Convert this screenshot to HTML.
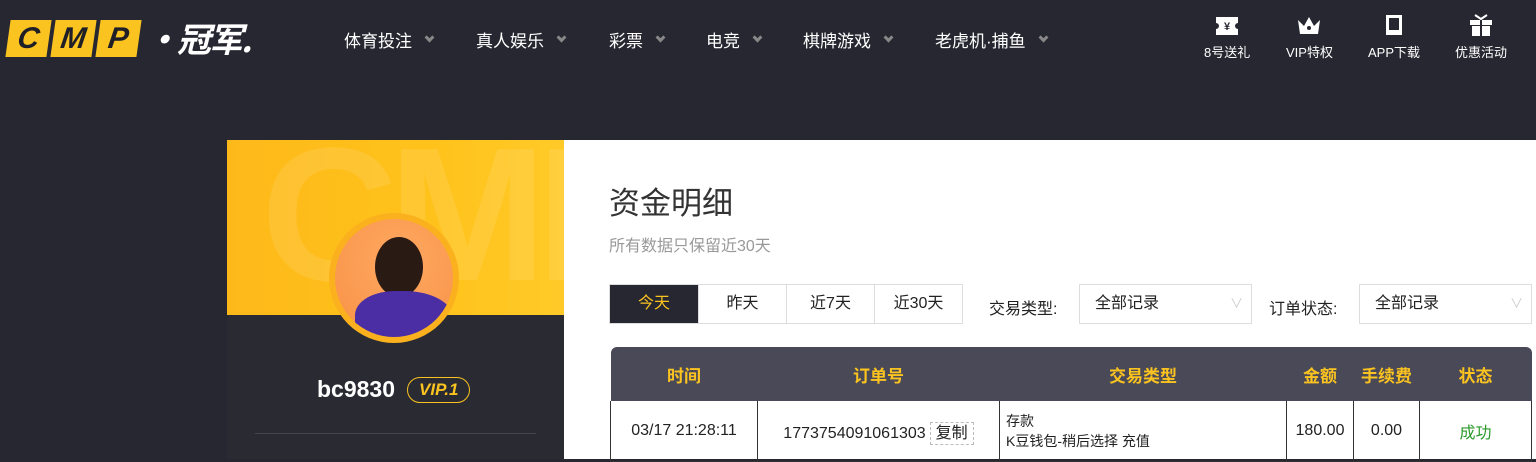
<!DOCTYPE html>
<html><head><meta charset="utf-8"><style>
*{margin:0;padding:0;box-sizing:border-box}
body{width:1536px;height:459px;overflow:hidden;background:#272731;font-family:"Liberation Sans","Noto Sans CJK SC",sans-serif;position:relative}
.logo{position:absolute;left:8px;top:20px;display:flex;gap:4px}
.logo span{display:block;width:41px;height:37px;background:#fbc31f;color:#1f1f27;font:italic bold 30px/37px "Liberation Sans",sans-serif;text-align:center;transform:skewX(-8deg)}
.gj{position:absolute;left:145px;top:18px;color:#fff;font:italic bold 34px/40px "Noto Sans CJK SC",sans-serif;letter-spacing:-2px}
.nav{position:absolute;top:27px;left:344px;display:flex;color:#fff;font-size:17px}
.nav div{display:flex;align-items:center;position:absolute;white-space:nowrap}
.nav i{display:inline-block;width:7px;height:7px;border-right:3px solid #888;border-bottom:3px solid #888;transform:rotate(45deg);margin-left:14px;margin-top:-4px}
.tops{position:absolute;top:14px;display:flex;flex-direction:column;align-items:center;color:#fff;font-size:13px}
.tops svg{margin-bottom:6px}
.card{position:absolute;left:227px;top:140px;width:337px;height:319px;background:#2a2a33}
.ban{height:175px;background:linear-gradient(90deg,#fdb91a,#ffc21b 60%,#ffca28);overflow:hidden;position:relative}
.ban b{position:absolute;left:34px;top:-20px;font:bold 190px/1 "Liberation Sans",sans-serif;color:rgba(255,255,255,.1);letter-spacing:-10px}
.av{position:absolute;left:102px;top:73px;width:130px;height:130px;border-radius:50%;background:#fab11d;padding:6px}
.av div{width:100%;height:100%;border-radius:50%;background:radial-gradient(circle at 55% 35%,#ffa861,#f79145);overflow:hidden;position:relative}
.av div:after{content:"";position:absolute;left:20px;top:72px;width:100px;height:60px;background:#4b2ea3;border-radius:40% 50% 0 0}
.av div:before{content:"";position:absolute;left:40px;top:18px;width:48px;height:60px;background:#2a1a14;border-radius:50%}
.name{position:absolute;top:236px;left:90px;color:#fff;font:bold 23px "Liberation Sans",sans-serif;display:flex;align-items:center}
.vip{margin-left:12px;border:1px solid #fbc31f;border-radius:14px;color:#fbc31f;font:italic bold 17px/24px "Liberation Sans";padding:0 11px}
.line{position:absolute;left:28px;top:293px;width:281px;height:1px;background:#44444c}
.main{position:absolute;left:564px;top:140px;width:972px;height:319px;background:#fff}
h1{position:absolute;left:45px;top:38px;font-weight:normal;font-size:31px;color:#333}
.sub{position:absolute;left:45px;top:92px;color:#999;font-size:16px}
.tabs{position:absolute;left:45px;top:144px;display:flex;border:1px solid #ddd}
.tabs div{width:88px;height:38px;line-height:38px;text-align:center;font-size:16px;color:#222;border-left:1px solid #ddd}
.tabs div:first-child{border:0;background:#272731;color:#fbc31f}
.lbl{position:absolute;top:155px;font-size:16px;color:#222}
.sel{position:absolute;top:144px;height:40px;border:1px solid #ddd;font-size:16px;line-height:38px;padding-left:15px;color:#222}
.sel:after{content:"∨";position:absolute;right:8px;top:0;color:#ccc;font-size:13px}
table{position:absolute;left:46px;top:207px;border-collapse:collapse;width:922px}
th{background:#4a4957;color:#fbc31f;height:54px;font-size:17px}
thead tr th:first-child{border-top-left-radius:6px}
thead tr th:last-child{border-top-right-radius:6px}
td{border:1px solid #333;height:60px;text-align:center;font-size:16px;color:#222;border-top:0}
.cp{border:1px dashed #bbb;padding:2px 5px;margin-left:4px}
</style></head><body>
<div class="logo"><span>C</span><span>M</span><span>P</span></div>
<div class="gj">·冠军.</div>
<div class="nav"><div style="left:0">体育投注<i></i></div><div style="left:132px">真人娱乐<i></i></div><div style="left:265px">彩票<i></i></div><div style="left:362px">电竞<i></i></div><div style="left:459px">棋牌游戏<i></i></div><div style="left:591px">老虎机·捕鱼<i></i></div></div>
<div class="tops" style="left:1204px"><svg width="24" height="22"><path d="M1 3h22v6a3 3 0 0 0 0 6v6H1v-6a3 3 0 0 0 0-6z" fill="#fff"/><text x="12" y="16" font-size="11" text-anchor="middle" fill="#272731" font-weight="bold">¥</text></svg>8号送礼</div>
<div class="tops" style="left:1286px"><svg width="28" height="22"><path d="M3 6l6 6 5-9 5 9 6-6-2 14H5z" fill="#fff"/><circle cx="14" cy="14" r="2" fill="#272731"/></svg>VIP特权</div>
<div class="tops" style="left:1368px"><svg width="20" height="22"><rect x="2" y="1" width="16" height="20" fill="#fff"/><rect x="5" y="4" width="10" height="12" fill="#272731"/></svg>APP下载</div>
<div class="tops" style="left:1455px"><svg width="26" height="22"><rect x="2" y="6" width="22" height="5" fill="#fff"/><rect x="4" y="12" width="18" height="10" fill="#fff"/><rect x="12" y="6" width="2" height="16" fill="#272731"/><path d="M7 1l6 4 6-4" stroke="#fff" stroke-width="2" fill="none"/></svg>优惠活动</div>
<div class="card"><div class="ban"><b>CMP</b></div><div class="av"><div></div></div>
<div class="name">bc9830<span class="vip">VIP.1</span></div><div class="line"></div></div>
<div class="main">
<h1>资金明细</h1><div class="sub">所有数据只保留近30天</div>
<div class="tabs"><div>今天</div><div>昨天</div><div>近7天</div><div>近30天</div></div>
<div class="lbl" style="left:425px">交易类型:</div>
<div class="sel" style="left:515px;width:173px">全部记录</div>
<div class="lbl" style="left:705px">订单状态:</div>
<div class="sel" style="left:795px;width:173px">全部记录</div>
<table><thead><tr><th style="width:147px">时间</th><th style="width:242px">订单号</th><th style="width:287px">交易类型</th><th style="width:67px">金额</th><th style="width:66px">手续费</th><th>状态</th></tr></thead>
<tbody><tr><td>03/17 21:28:11</td><td>1773754091061303<span class="cp">复制</span></td><td style="text-align:left;padding-left:6px;font-size:14px;line-height:20px">存款<br>K豆钱包-稍后选择 充值</td><td>180.00</td><td>0.00</td><td style="color:#2a9a2a">成功</td></tr></tbody></table>
</div>
</body></html>
